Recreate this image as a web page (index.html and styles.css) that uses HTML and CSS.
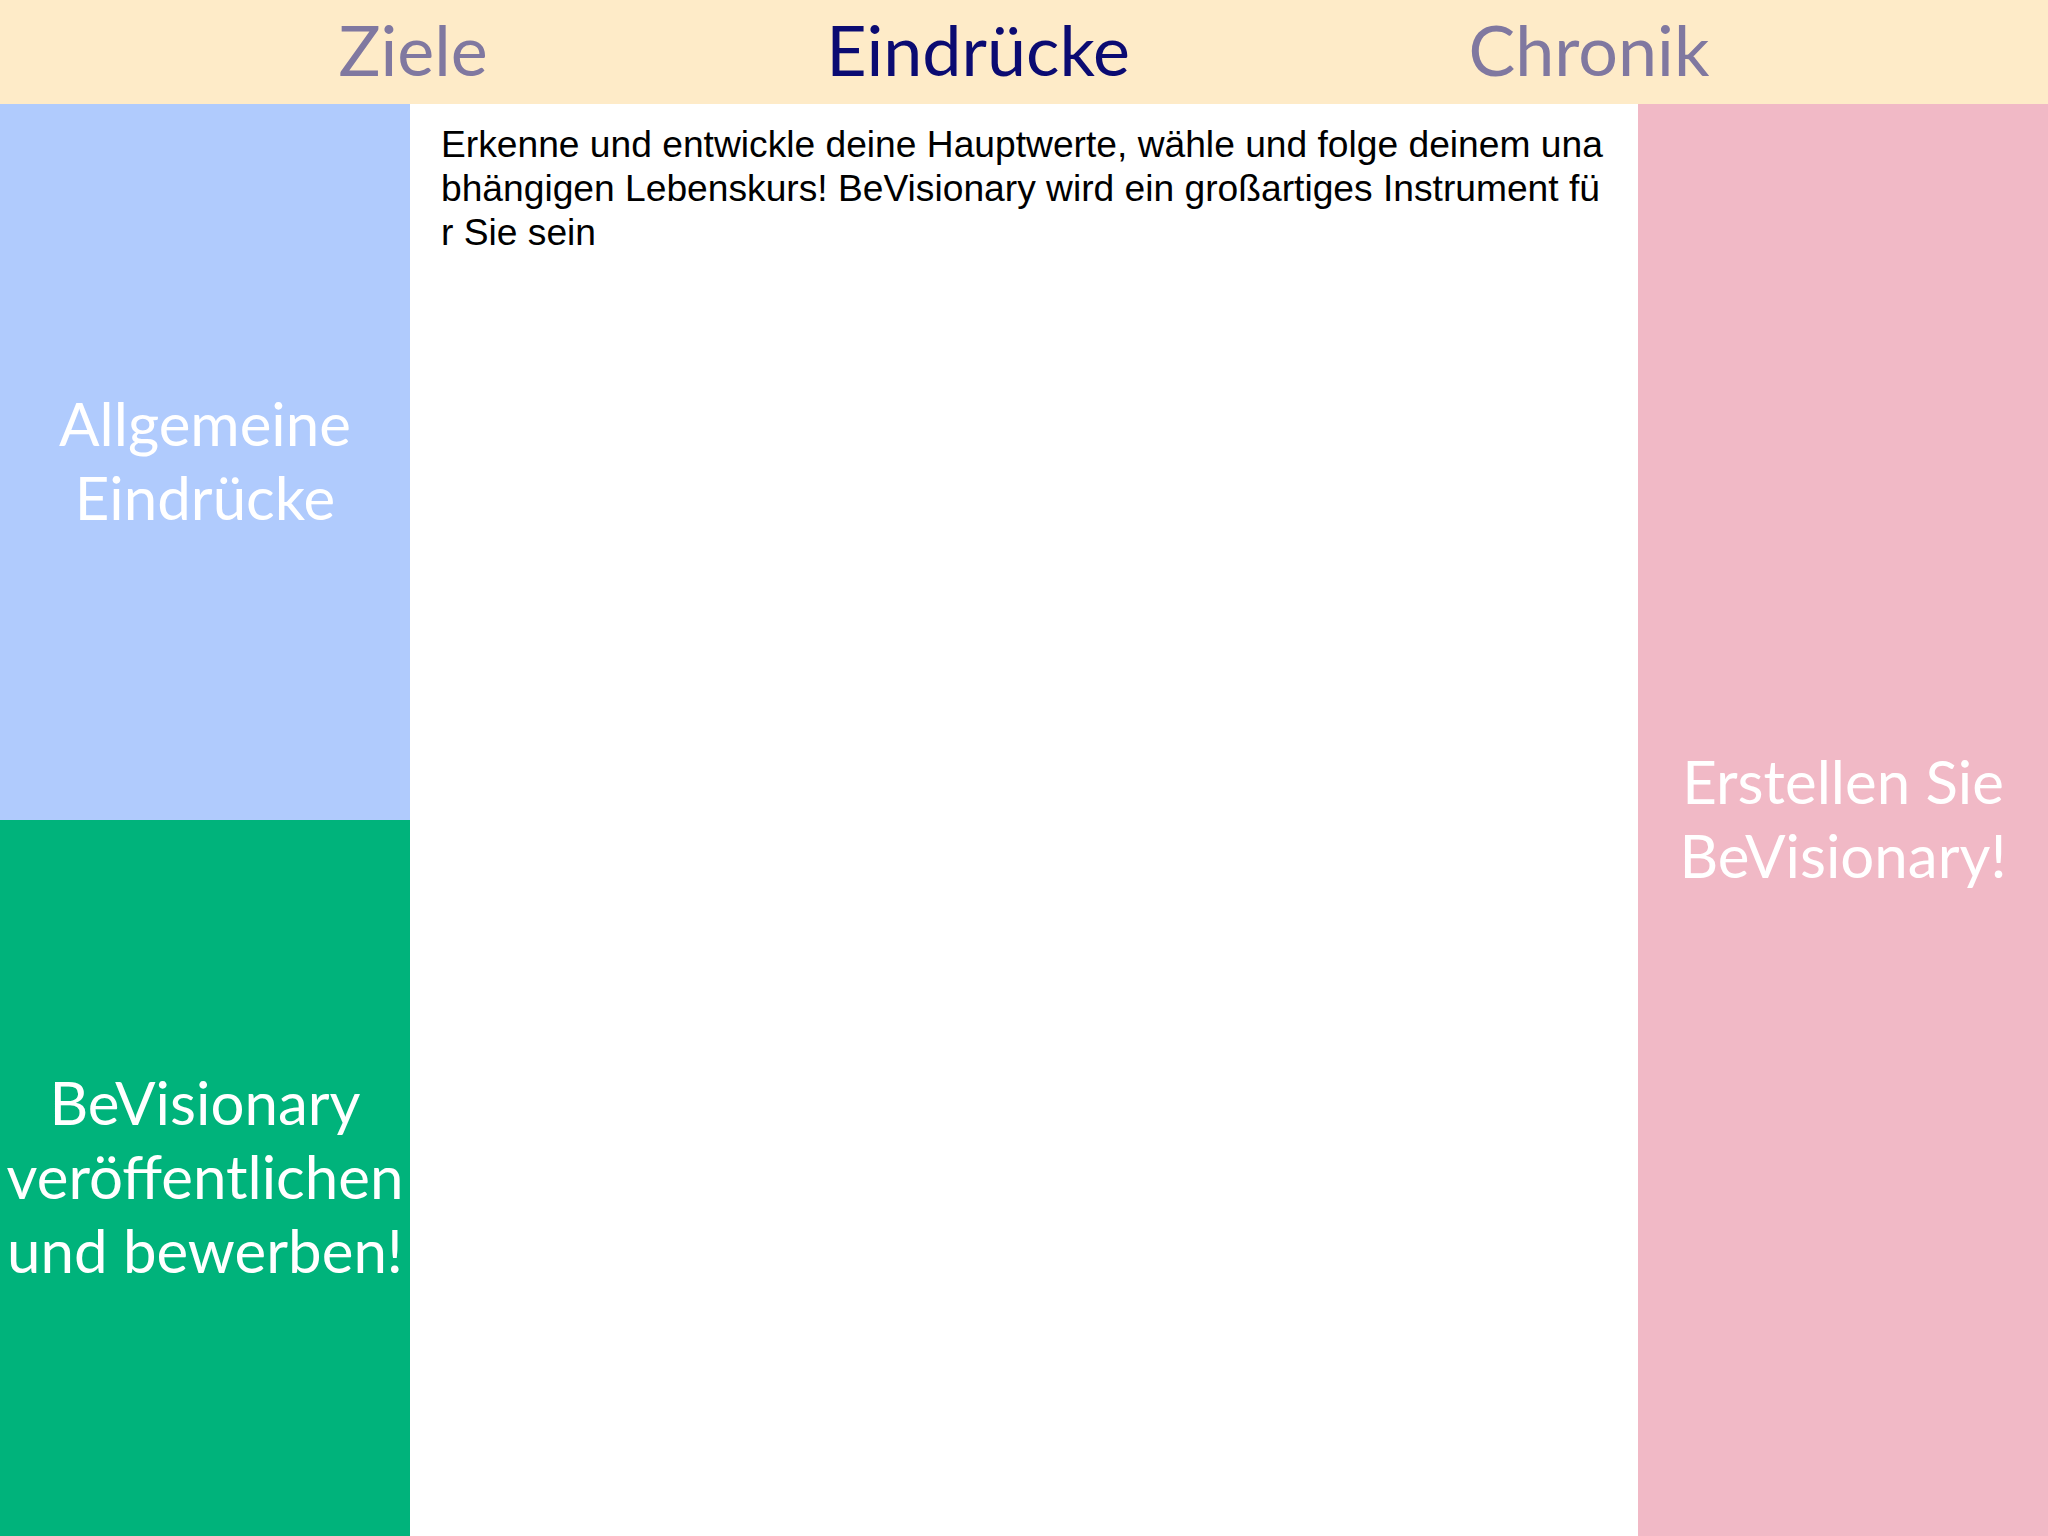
FILE: index.html
```html
<!DOCTYPE html>
<html lang="de">
<head>
<meta charset="utf-8">
<title>BeVisionary</title>
<link rel="stylesheet" href="styles.css">
</head>
<body>
<div class="app">
  <header class="tabs">
    <span class="tab">Ziele</span>
    <span class="tab active">Eindrücke</span>
    <span class="tab">Chronik</span>
  </header>
  <main class="main">
    <div class="left">
      <div class="panel blue">Allgemeine<br>Eindrücke</div>
      <div class="panel green">BeVisionary<br>veröffentlichen<br>und bewerben!</div>
    </div>
    <div class="content">
      <p class="intro">Erkenne und entwickle deine Hauptwerte, wähle und folge deinem unabhängigen Lebenskurs! BeVisionary wird ein großartiges Instrument für Sie sein</p>
    </div>
    <div class="panel pink">Erstellen Sie<br>BeVisionary!</div>
  </main>
</div>
</body>
</html>
```
FILE: styles.css
```css
html, body {
  margin: 0;
  padding: 0;
}
body {
  width: 2048px;
  height: 1536px;
  overflow: hidden;
  background: #ffffff;
  font-family: "Lato", "Open Sans", sans-serif;
}
.app {
  display: flex;
  flex-direction: column;
  height: 1536px;
}
.tabs {
  height: 104px;
  flex: none;
  box-sizing: border-box;
  padding-bottom: 6px;
  background: #feebc8;
  display: flex;
  justify-content: space-evenly;
  align-items: center;
}
.tab {
  font-size: 70px;
  color: #8078a0;
  line-height: 1;
}
.tab.active {
  color: #0b0b72;
}
.main {
  flex: 1;
  display: grid;
  grid-template-columns: 410px 1fr 410px;
  min-height: 0;
}
.left {
  display: grid;
  grid-template-rows: 1fr 1fr;
}
.panel {
  display: flex;
  align-items: center;
  justify-content: center;
  text-align: center;
  color: #ffffff;
  font-size: 60px;
  line-height: 74px;
  padding-bottom: 4px;
}
.blue { background: #b0cbfd; }
.green { background: #00b37b; }
.pink { background: #f1b9c6; }
.content {
  padding: 18px 31px;
}
.intro {
  margin: 0;
  font-family: "Liberation Sans", Arial, sans-serif;
  font-size: 37.2px;
  line-height: 44px;
  color: #000000;
  word-break: break-all;
}
```
